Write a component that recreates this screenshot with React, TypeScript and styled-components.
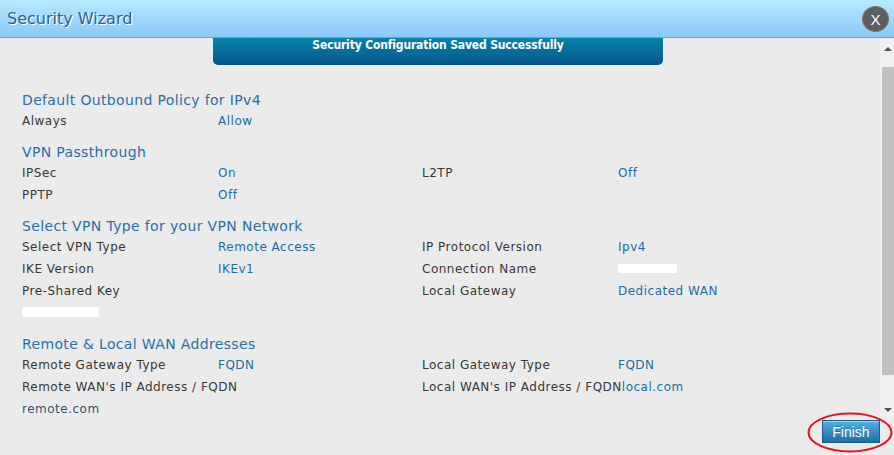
import React from "react";
import styled, { createGlobalStyle } from "styled-components";

const GlobalStyle = createGlobalStyle`
  html, body {
    margin: 0;
    padding: 0;
    background: #ebebeb;
  }
  body {
    font-family: "DejaVu Sans", Verdana, sans-serif;
  }
`;

const Window = styled.div`
  width: 894px;
  height: 455px;
  display: flex;
  flex-direction: column;
  overflow: hidden;
  background: #ebebeb;
`;

const TitleBar = styled.div`
  height: 37px;
  border-bottom: 1px solid #6fa6cf;
  display: flex;
  align-items: center;
  justify-content: space-between;
  padding: 0 5px 0 7px;
  background: linear-gradient(#b6eafe, #8bc8fa);
`;

const Title = styled.div`
  font-size: 16px;
  color: #2b6392;
  text-shadow: 1px 1px 0 #ffffff;
`;

const CloseButton = styled.div`
  width: 25px;
  height: 24px;
  border-radius: 50%;
  border: 1px solid #777777;
  background: #5e5e5e;
  color: #ffffff;
  font-family: "Liberation Sans", Arial, sans-serif;
  font-size: 15px;
  display: flex;
  align-items: center;
  justify-content: center;
  margin-top: 1px;
`;

const Body = styled.div`
  height: 380px;
  display: flex;
`;

const Content = styled.div`
  flex: 1;
  overflow: hidden;
`;

const Banner = styled.div`
  width: 450px;
  height: 27px;
  margin-left: 213px;
  border-radius: 0 0 5px 5px;
  background: linear-gradient(#0784ac, #035688);
  color: #ffffff;
  font-family: "DejaVu Sans Condensed", "DejaVu Sans", sans-serif;
  font-weight: bold;
  font-size: 12px;
  letter-spacing: -0.15px;
  line-height: 15px;
  text-align: center;
`;

const Sections = styled.div`
  padding: 25px 0 0 22px;
`;

const Heading = styled.div<{ $first?: boolean }>`
  margin-top: ${(p) => (p.$first ? 0 : 10)}px;
  font-size: 14px;
  line-height: 20px;
  letter-spacing: 0.35px;
  color: #2a6fa8;
`;

const Row = styled.div`
  display: grid;
  grid-template-columns: 196px 204px 196px 1fr;
  height: 22px;
  align-items: center;
  font-size: 12px;
  letter-spacing: 0.5px;
  white-space: nowrap;
`;

const Cell = styled.span<{ $span?: number }>`
  grid-column: ${(p) => (p.$span ? `span ${p.$span}` : "auto")};
`;

const Label = styled.span`
  color: #383838;
`;

const Value = styled.span<{ $muted?: boolean }>`
  color: ${(p) => (p.$muted ? "#35546f" : "#1b6da7")};
`;

const Redacted = styled.span<{ $w: number; $h: number }>`
  display: inline-block;
  width: ${(p) => p.$w}px;
  height: ${(p) => p.$h}px;
  background: #ffffff;
  border-radius: 1px;
`;

const Scrollbar = styled.div`
  width: 14px;
  background: #f0f0f0;
  display: flex;
  flex-direction: column;
`;

const ArrowButton = styled.div<{ $h: number }>`
  height: ${(p) => p.$h}px;
  display: flex;
  align-items: center;
  justify-content: center;
  padding-left: 1px;
`;

const Arrow = styled.div<{ $down?: boolean }>`
  width: 0;
  height: 0;
  border-left: 4px solid transparent;
  border-right: 4px solid transparent;
  ${(p) =>
    p.$down
      ? "border-top: 4px solid #505050;"
      : "border-bottom: 4px solid #505050;"}
`;

const Track = styled.div`
  flex: 1;
  padding-top: 8px;
  display: flex;
  justify-content: flex-end;
`;

const Thumb = styled.div`
  width: 12px;
  height: 308px;
  background: #c1c1c1;
`;

const Footer = styled.div`
  flex: 1;
  display: flex;
  justify-content: flex-end;
  align-items: flex-start;
  padding: 2px 14px 0 0;
`;

const FinishWrap = styled.div`
  position: relative;
`;

const FinishButton = styled.button`
  width: 58px;
  height: 23px;
  padding: 0;
  border: 1px solid #1a5d8c;
  background: linear-gradient(#55b0e0, #1b6fa6);
  box-shadow: inset 0 1px 0 rgba(255, 255, 255, 0.45);
  color: #ffffff;
  font-family: "Liberation Sans", Arial, sans-serif;
  font-size: 14px;
  text-shadow: 0 -1px 0 rgba(0, 0, 0, 0.25);
  cursor: pointer;
`;

const Ring = styled.svg`
  position: absolute;
  left: -15px;
  top: -8px;
  pointer-events: none;
`;

type Item = { text?: string; value?: boolean; blank?: [number, number] };

const sections: { heading: string; lines: Item[][] }[] = [
  {
    heading: "Default Outbound Policy for IPv4",
    lines: [[{ text: "Always" }, { text: "Allow", value: true }]],
  },
  {
    heading: "VPN Passthrough",
    lines: [
      [
        { text: "IPSec" },
        { text: "On", value: true },
        { text: "L2TP" },
        { text: "Off", value: true },
      ],
      [{ text: "PPTP" }, { text: "Off", value: true }],
    ],
  },
  {
    heading: "Select VPN Type for your VPN Network",
    lines: [
      [
        { text: "Select VPN Type" },
        { text: "Remote Access", value: true },
        { text: "IP Protocol Version" },
        { text: "Ipv4", value: true },
      ],
      [
        { text: "IKE Version" },
        { text: "IKEv1", value: true },
        { text: "Connection Name" },
        { blank: [59, 9] },
      ],
      [
        { text: "Pre-Shared Key" },
        {},
        { text: "Local Gateway" },
        { text: "Dedicated WAN", value: true },
      ],
      [{ blank: [77, 10] }],
    ],
  },
];

const renderItem = (c: Item, i: number) => (
  <Cell key={i}>
    {c.blank ? (
      <Redacted $w={c.blank[0]} $h={c.blank[1]} />
    ) : c.value ? (
      <Value>{c.text}</Value>
    ) : (
      <Label>{c.text}</Label>
    )}
  </Cell>
);

export default function App() {
  return (
    <Window>
      <GlobalStyle />
      <TitleBar>
        <Title>Security Wizard</Title>
        <CloseButton>X</CloseButton>
      </TitleBar>
      <Body>
        <Content>
          <Banner>Security Configuration Saved Successfully</Banner>
          <Sections>
            {sections.map((s, si) => (
              <React.Fragment key={s.heading}>
                <Heading $first={si === 0}>{s.heading}</Heading>
                {s.lines.map((line, li) => (
                  <Row key={li}>{line.map(renderItem)}</Row>
                ))}
              </React.Fragment>
            ))}
            <Heading>Remote &amp; Local WAN Addresses</Heading>
            <Row>
              <Cell><Label>Remote Gateway Type</Label></Cell>
              <Cell><Value>FQDN</Value></Cell>
              <Cell><Label>Local Gateway Type</Label></Cell>
              <Cell><Value>FQDN</Value></Cell>
            </Row>
            <Row>
              <Cell $span={2}><Label>Remote WAN's IP Address / FQDN</Label></Cell>
              <Cell $span={2}>
                <Label>Local WAN's IP Address / FQDN</Label>
                <Value>local.com</Value>
              </Cell>
            </Row>
            <Row>
              <Cell><Value $muted>remote.com</Value></Cell>
            </Row>
          </Sections>
        </Content>
        <Scrollbar>
          <ArrowButton $h={21}>
            <Arrow />
          </ArrowButton>
          <Track>
            <Thumb />
          </Track>
          <ArrowButton $h={17}>
            <Arrow $down />
          </ArrowButton>
        </Scrollbar>
      </Body>
      <Footer>
        <FinishWrap>
          <FinishButton>Finish</FinishButton>
          <Ring width="86" height="41" viewBox="0 0 86 41">
            <ellipse cx="43" cy="20.5" rx="41.5" ry="19" fill="none" stroke="#e3141c" strokeWidth="2" />
          </Ring>
        </FinishWrap>
      </Footer>
    </Window>
  );
}
